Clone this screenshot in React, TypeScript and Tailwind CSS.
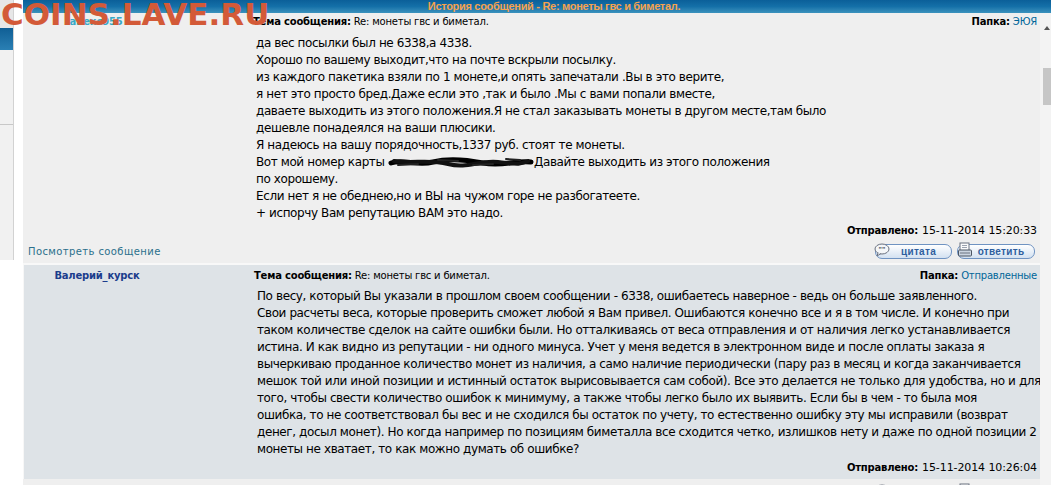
import React from "react";

const body1: (string | "SCRIBBLE")[][] = [
  ["да вес посылки был не 6338,а 4338."],
  ["Хорошо по вашему выходит,что на почте вскрыли посылку."],
  ["из каждого пакетика взяли по 1 монете,и опять запечатали .Вы в это верите,"],
  ["я нет это просто бред.Даже если это ,так и было .Мы с вами попали вместе,"],
  ["даваете выходить из этого положения.Я не стал заказывать монеты в другом месте,там было"],
  ["дешевле понадеялся на ваши плюсики."],
  ["Я надеюсь на вашу порядочность,1337 руб. стоят те монеты."],
  ["Вот мой номер карты ", "SCRIBBLE", "Давайте выходить из этого положения"],
  ["по хорошему."],
  ["Если нет я не обеднею,но и ВЫ на чужом горе не разбогатеете."],
  ["+ испорчу Вам репутацию ВАМ это надо."],
];

const body2 = [
  "По весу, который Вы указали в прошлом своем сообщении - 6338, ошибаетесь наверное - ведь он больше заявленного.",
  "Свои расчеты веса, которые проверить сможет любой я Вам привел. Ошибаются конечно все и я в том числе. И конечно при",
  "таком количестве сделок на сайте ошибки были. Но отталкиваясь от веса отправления и от наличия легко устанавливается",
  "истина. И как видно из репутации - ни одного минуса. Учет у меня ведется в электронном виде и после оплаты заказа я",
  "вычеркиваю проданное количество монет из наличия, а само наличие периодически (пару раз в месяц и когда заканчивается",
  "мешок той или иной позиции и истинный остаток вырисовывается сам собой). Все это делается не только для удобства, но и для",
  "того, чтобы свести количество ошибок к минимуму, а также чтобы легко было их выявить. Если бы в чем - то была моя",
  "ошибка, то не соответствовал бы вес и не сходился бы остаток по учету, то естественно ошибку эту мы исправили (возврат",
  "денег, досыл монет). Но когда например по позициям биметалла все сходится четко, излишков нету и даже по одной позиции 2",
  "монеты не хватает, то как можно думать об ошибке?",
];

function Scribble() {
  return (
    <svg width="146" height="12" viewBox="0 0 146 12" className="inline-block align-[-2px]">
      <path d="M3 7 C 15 3, 30 10, 45 6 S 75 3, 95 7 S 125 4, 143 6" stroke="#000" strokeWidth="5" fill="none" strokeLinecap="round" />
      <path d="M6 5 C 25 8, 40 3, 60 8 S 90 4, 110 6 S 130 9, 140 5" stroke="#111" strokeWidth="4" fill="none" strokeLinecap="round" />
      <path d="M10 9 L 30 8 M 50 4 L 70 5 M 85 9 L 105 8 M 118 3 L 132 4" stroke="#222" strokeWidth="2" fill="none" strokeLinecap="round" />
    </svg>
  );
}

function QuoteIcon() {
  return (
    <svg width="16" height="14" viewBox="0 0 16 14" className="absolute left-[-2px] top-[-2px]">
      <ellipse cx="8" cy="6" rx="7" ry="5" fill="#f4f6f8" stroke="#6b7280" strokeWidth="1" />
      <path d="M4 10 L3 13 L7 10.5" fill="#f4f6f8" stroke="#6b7280" strokeWidth="1" />
      <text x="4.5" y="8.5" fontSize="7" fontWeight="bold" fill="#4b5563" fontFamily="Liberation Sans, sans-serif">"</text>
      <text x="8" y="8.5" fontSize="7" fontWeight="bold" fill="#4b5563" fontFamily="Liberation Sans, sans-serif">"</text>
    </svg>
  );
}

function ReplyIcon() {
  return (
    <svg width="16" height="16" viewBox="0 0 16 16" className="absolute left-[-1px] top-[-3px]">
      <rect x="3" y="1" width="9" height="8" fill="#fbfbfb" stroke="#6b7280" strokeWidth="1" />
      <path d="M5 3.5 H10 M5 5.5 H10" stroke="#9ca3af" strokeWidth="1" />
      <rect x="1.5" y="8" width="13" height="6" rx="1" fill="#cbd5e1" stroke="#4b5563" strokeWidth="1" />
      <path d="M3 11 H13" stroke="#6b7280" strokeWidth="1" />
    </svg>
  );
}

function Btn({ label, kind, w }: { label: string; kind: "q" | "r"; w: string }) {
  return (
    <div
      className={`relative h-[15px] ${w} rounded-[7px] border border-[#6f93c2] bg-gradient-to-b from-[#ffffff] to-[#d3e1f1] flex items-center justify-center pl-[10px] text-[10px] font-bold leading-none text-[#2f5f9e] font-['Liberation_Sans',sans-serif] tracking-[0.3px]`}
    >
      {kind === "q" ? <QuoteIcon /> : <ReplyIcon />}
      {label}
    </div>
  );
}

function SubjectRow({ name, nameCls, folder }: { name: string; nameCls: string; folder: string }) {
  return (
    <div className="flex items-center h-[12px] leading-[12px] tracking-[-0.2px]">
      <div className="w-[230px] shrink-0">
        <div className={`w-[146px] text-center text-[10px] font-bold ${nameCls}`}>{name}</div>
      </div>
      <div className="flex-1 min-w-0 text-[10px] text-black whitespace-nowrap">
        <b>Тема сообщения:</b> Re: монеты гвс и биметал.
      </div>
      <div className="pr-[3px] text-[10px] whitespace-nowrap">
        <b className="text-black">Папка:</b> <span className="text-[#006699]">{folder}</span>
      </div>
    </div>
  );
}

function DateRow({ date }: { date: string }) {
  return (
    <div className="flex justify-end items-center h-[14px] leading-[14px] pr-[3px] whitespace-nowrap text-black">
      <b className="text-[10px] tracking-[-0.2px]">Отправлено:</b>
      <span className="text-[11px] ml-[4px] tracking-[-0.1px]">{date}</span>
    </div>
  );
}

function Footer() {
  return (
    <div className="shrink-0 flex items-center justify-between h-[25px] pt-[6px] pb-[4px] bg-[#efefef] pl-[5px] pr-[5px]">
      <span className="text-[10px] leading-[15px] tracking-[0.4px] text-[#2b6f8c]">Посмотреть сообщение</span>
      <div className="flex gap-[5px]">
        <Btn label="цитата" kind="q" w="w-[77px]" />
        <Btn label="ответить" kind="r" w="w-[78px]" />
      </div>
    </div>
  );
}

export default function App() {
  return (
    <div className="relative w-[1051px] h-[485px] overflow-hidden bg-white flex font-['DejaVu_Sans',sans-serif]">
      {/* left sidebar */}
      <div className="w-[23px] shrink-0 flex flex-col bg-white">
        <div className="w-[14px] h-[260px] shrink-0 flex flex-col bg-[#f1f1f1] border-r border-[#d2d2d2]">
          <div className="h-[28px] shrink-0 bg-[#e7e7e7]" />
          <div className="h-[22px] shrink-0 bg-gradient-to-b from-[#0f5f95] to-[#2a80b4]" />
          <div className="h-[75px] shrink-0 border-b border-[#c8c8c8]" />
        </div>
      </div>

      <div className="flex-1 min-w-0 flex flex-col">
        {/* header */}
        <div className="h-[13px] shrink-0 bg-gradient-to-b from-[#0b5f99] via-[#1470a8] to-[#3a92bd] flex items-center justify-center">
          <span className="text-[11px] leading-none font-bold tracking-[-0.3px] text-[#f5a24f] font-['Liberation_Sans',sans-serif] pl-[34px]">
            История сообщений - Re: монеты гвс и биметал.
          </span>
        </div>

        <div className="flex-1 min-h-0 flex">
          {/* content */}
          <div className="flex-1 min-w-0 overflow-hidden flex flex-col bg-[#f7f7f7]">
            {/* message 1 */}
            <div className="shrink-0 bg-[#efefef] pt-[3px]">
              <SubjectRow name="алекс955" nameCls="text-[#38a9c6]" folder="ЭЮЯ" />
              <div className="mt-[7px] pl-[233px] text-[12px] leading-[17px] tracking-[-0.4px] text-black whitespace-nowrap">
                {body1.map((parts, i) => (
                  <div key={i} className="h-[17px]">
                    {parts.map((p, j) => (p === "SCRIBBLE" ? <Scribble key={j} /> : <span key={j}>{p}</span>))}
                  </div>
                ))}
              </div>
              <div className="mt-[2px]">
                <DateRow date="15-11-2014 15:20:33" />
              </div>
            </div>
            <Footer />
            <div className="shrink-0 h-[2px] bg-[#f8f8f8]" />

            {/* message 2 */}
            <div className="shrink-0 bg-[#dee3e7] pt-[5px] pb-[4px] ml-[1px]">
              <SubjectRow name="Валерий_курск" nameCls="text-[#1b3d8c]" folder="Отправленные" />
              <div className="mt-[6px] pl-[233px] text-[12px] leading-[17px] tracking-[-0.4px] text-black whitespace-nowrap">
                {body2.map((l, i) => (
                  <div key={i} className="h-[17px]">{l}</div>
                ))}
              </div>
              <div className="mt-[3px]">
                <DateRow date="15-11-2014 10:26:04" />
              </div>
            </div>
            <Footer />
          </div>

          {/* scrollbar strip */}
          <div className="w-[11px] shrink-0 bg-[#f3f3f3] flex flex-col items-end">
            <div className="mt-[13px] mr-[1px] w-0 h-0 border-l-[3px] border-r-[3px] border-b-[4px] border-l-transparent border-r-transparent border-b-[#555]" />
            <div className="mt-[38px] w-[8px] h-[37px] bg-[#c6c6c6]" />
          </div>
        </div>
      </div>

      {/* watermark */}
      <div className="absolute left-[1px] top-[-1px] text-[31px] leading-[31px] font-bold text-[#d35a38] font-['DejaVu_Sans',sans-serif] pointer-events-none">
        COINS.LAVE.RU
      </div>
    </div>
  );
}
